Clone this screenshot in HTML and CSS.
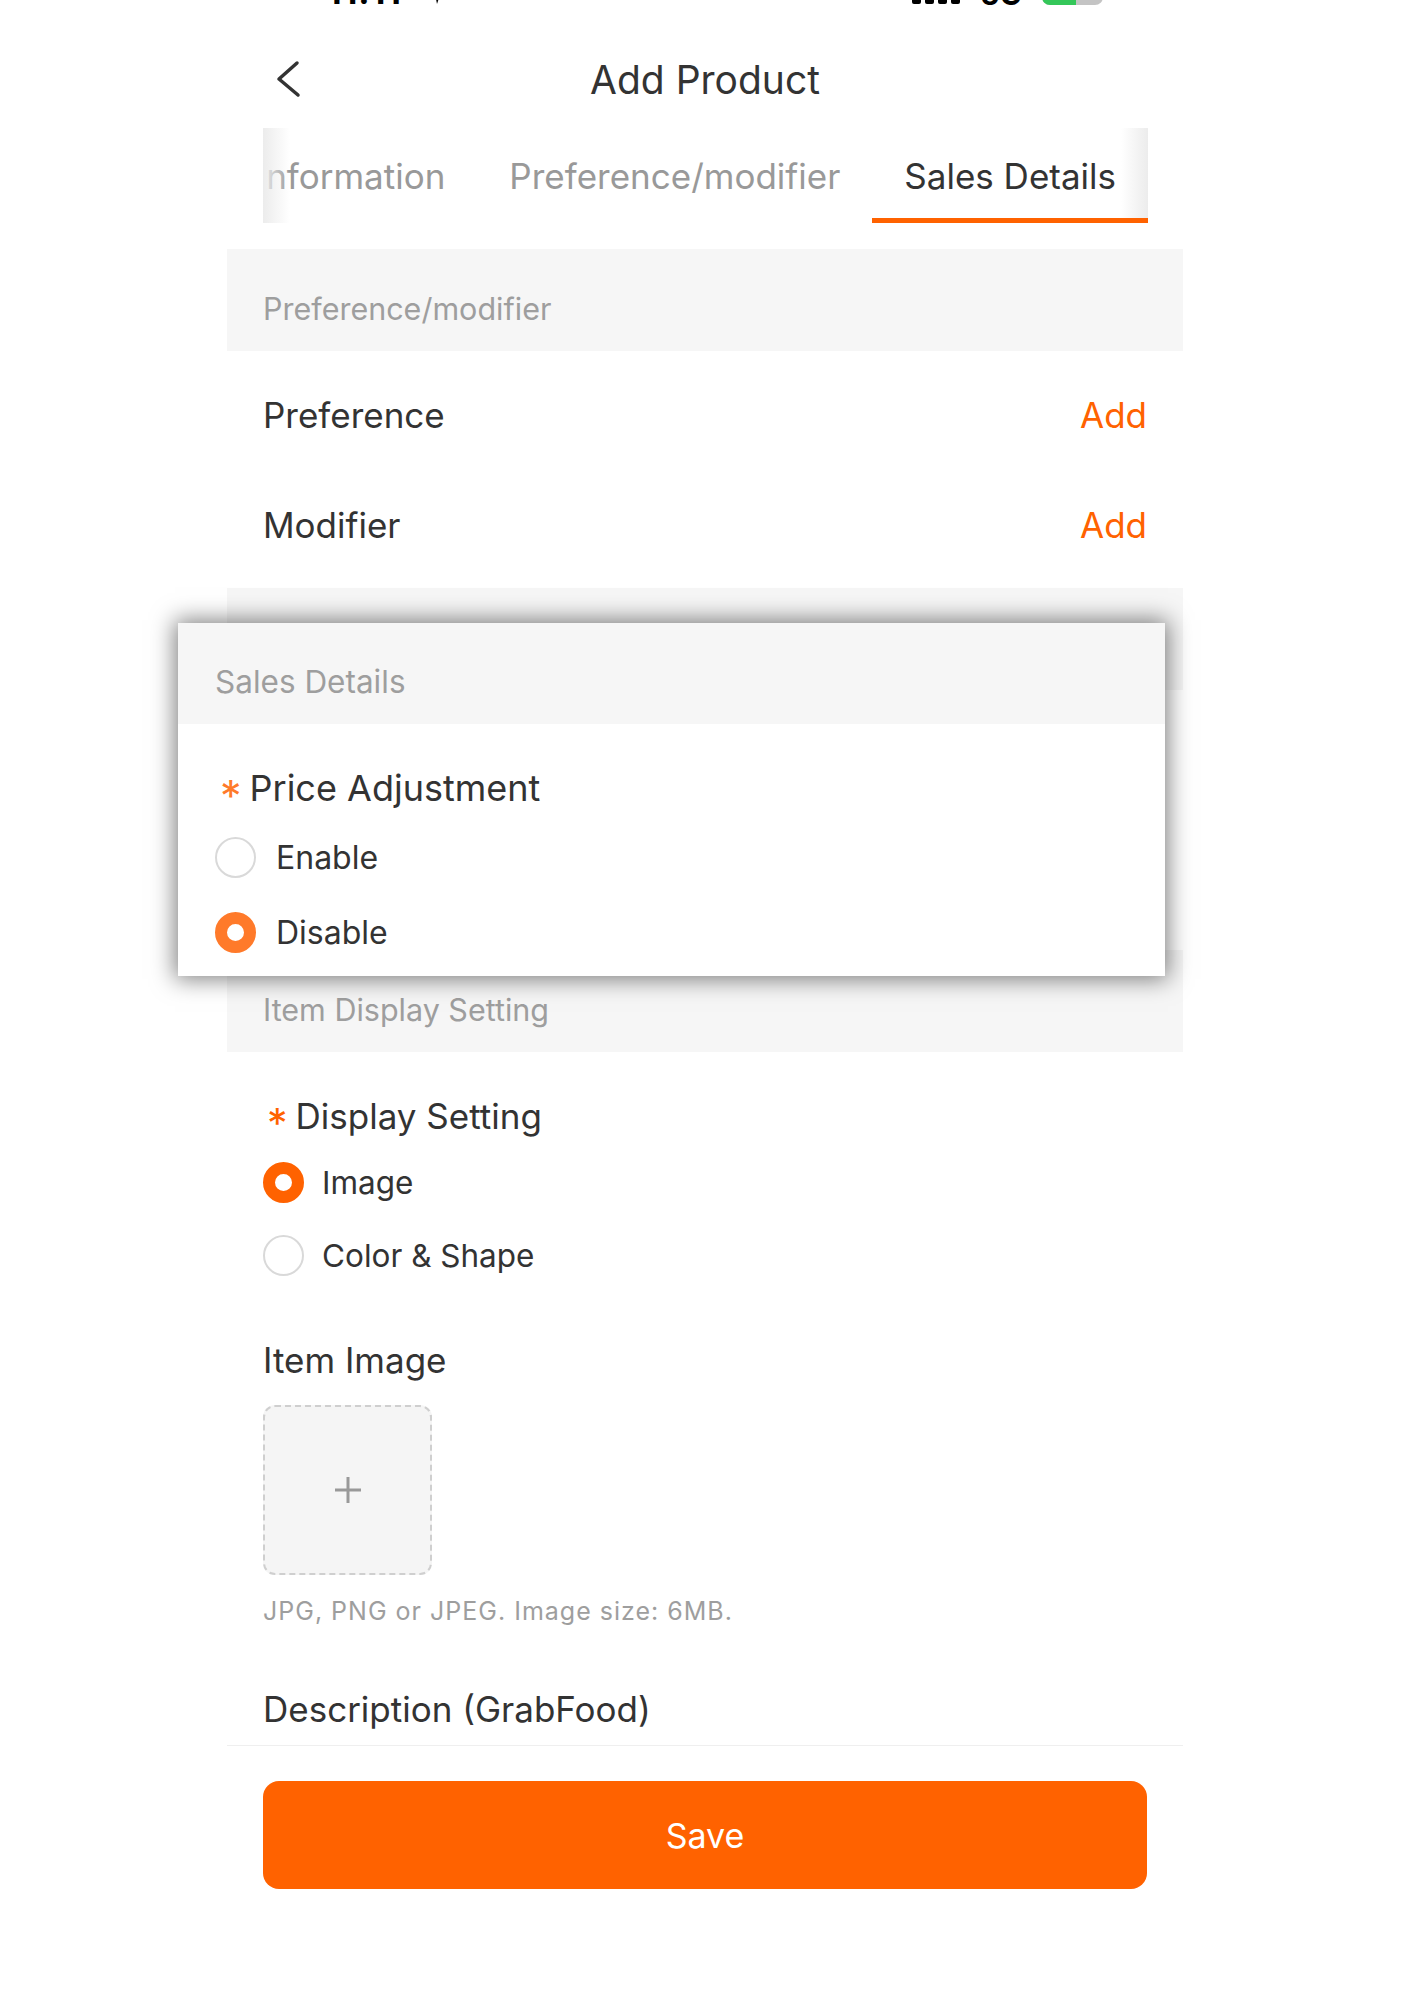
FILE: index.html
```html
<!DOCTYPE html>
<html lang="en">
<head>
    <meta charset="UTF-8">
    <meta name="viewport" content="width=device-width, initial-scale=1.0">
    <title>Add Product</title>
    <link rel="stylesheet" href="styles.css">
</head>
<body>
<div class="page">
    <div class="status">
        <div class="status-left">
            <span class="status-time">11:11</span>
            <svg class="status-loc" width="20" height="22" viewBox="0 0 20 22"><path d="M18 0 L2 8 L9 11 L11 21 Z" fill="#000"/></svg>
        </div>
        <div class="status-right">
            <div class="signal"><span></span><span></span><span></span><span></span></div>
            <span class="net">5G</span>
            <div class="battery"><span class="battery-fill"></span></div>
        </div>
    </div>

    <div class="nav">
        <button class="back" aria-label="Back">
            <svg width="28" height="40" viewBox="0 0 28 40"><path d="M22 4 L4 20 L23 36" fill="none" stroke="#333" stroke-width="3.5" stroke-linecap="round" stroke-linejoin="round"/></svg>
        </button>
        <h1 class="nav-title">Add Product</h1>
        <span></span>
    </div>

    <div class="tabs">
        <div class="tab">Basic Information</div>
        <div class="tab">Preference/modifier</div>
        <div class="tab active">Sales Details</div>
    </div>

    <div class="section-head first">Preference/modifier</div>
    <div class="list">
        <div class="row"><span>Preference</span><a class="link" href="#">Add</a></div>
        <div class="row"><span>Modifier</span><a class="link" href="#">Add</a></div>
    </div>

    <div class="sales">
        <!-- the page underneath, covered by the callout -->
        <div class="under" aria-hidden="true">
            <div class="section-head"><span>Sales Details</span></div>
            <div class="field"></div>
        </div>

        <div class="callout">
            <div class="section-head">Sales Details</div>
            <div class="field">
                <div class="label"><span class="req">*</span>Price Adjustment</div>
                <label class="radio"><span class="dot"></span>Enable</label>
                <label class="radio"><span class="dot checked"></span>Disable</label>
            </div>
        </div>
    </div>

    <div class="section-head">Item Display Setting</div>
    <div class="field display">
        <div class="label"><span class="req">*</span>Display Setting</div>
        <label class="radio"><span class="dot checked"></span>Image</label>
        <label class="radio"><span class="dot"></span>Color &amp; Shape</label>

        <div class="label item-image">Item Image</div>
        <div class="upload">
            <svg width="28" height="28" viewBox="0 0 28 28"><path d="M14 1 V27 M1 14 H27" stroke="#999" stroke-width="3"/></svg>
        </div>
        <div class="hint">JPG, PNG or JPEG. Image size: 6MB.</div>

        <div class="label desc">Description (GrabFood)</div>
    </div>

    <div class="footer">
        <button class="save">Save</button>
    </div>
</div>
</body>
</html>
```

FILE: styles.css
```css
body {
    margin: 0;
    background: #fff;
    font-family: Inter, "Noto Sans", sans-serif;
    color: #333;
}

.page {
    width: 956px;
    margin-left: calc(50% - 480px);
}

/* status bar, only its bottom edge is on screen */
.status {
    height: 6px;
    overflow: hidden;
    display: flex;
    justify-content: space-between;
    align-items: flex-end;
    padding: 0 80px 0 100px;
}
.status-left {
    display: flex;
    align-items: flex-end;
    gap: 24px;
}
.status-time {
    font-size: 34px;
    font-weight: 700;
    line-height: 1;
    color: #000;
    margin-bottom: -3px;
    letter-spacing: 1px;
}
.status-loc {
    margin-bottom: 1px;
}
.status-right {
    display: flex;
    align-items: flex-end;
    gap: 20px;
}
.signal {
    display: flex;
    align-items: flex-end;
    gap: 4px;
    margin-bottom: 2px;
}
.signal span {
    width: 9px;
    height: 20px;
    background: #000;
    border-radius: 2px;
}
.net {
    font-size: 30px;
    font-weight: 700;
    line-height: 1;
    color: #000;
    margin-bottom: -3px;
}
.battery {
    width: 61px;
    height: 28px;
    border-radius: 8px;
    background: #c4c4c4;
    overflow: hidden;
    margin-bottom: 1px;
    display: flex;
}
.battery-fill {
    width: 34px;
    background: #34c759;
}

/* navigation */
.nav {
    height: 122px;
    box-sizing: border-box;
    padding-top: 24px;
    display: grid;
    grid-template-columns: 1fr auto 1fr;
    align-items: center;
}
.back {
    justify-self: start;
    margin-left: 48px;
    padding: 0;
    border: none;
    background: none;
    display: flex;
}
.nav-title {
    margin: 0;
    font-size: 39px;
    font-weight: 400;
    color: #333;
}

/* tabs */
.tabs {
    position: relative;
    height: 95px;
    margin: 0 35px 0 36px;
    overflow: hidden;
    display: flex;
    justify-content: flex-end;
}
.tabs::before,
.tabs::after {
    content: "";
    position: absolute;
    top: 0;
    width: 27px;
    z-index: 1;
}
.tabs::before {
    left: 0;
    height: 95px;
    background: linear-gradient(to right, #ececec, rgba(255, 255, 255, 0));
}
.tabs::after {
    right: 0;
    height: 90px;
    background: linear-gradient(to left, #ececec, rgba(255, 255, 255, 0));
}
.tab {
    flex-shrink: 0;
    box-sizing: border-box;
    height: 95px;
    padding: 5px 32px 0;
    display: flex;
    align-items: center;
    font-size: 35px;
    color: #999;
    border-bottom: 5px solid transparent;
    white-space: nowrap;
}
.tab.active {
    color: #333;
    border-bottom-color: #ff6200;
}

/* sections */
.section-head {
    height: 102px;
    box-sizing: border-box;
    padding: 16px 36px 0;
    display: flex;
    align-items: center;
    background: #f6f6f6;
    font-size: 30.5px;
    color: #9e9e9e;
}
.section-head.first {
    margin-top: 26px;
}

.list {
    padding: 9px 36px 8px;
}
.row {
    height: 110px;
    display: flex;
    justify-content: space-between;
    align-items: center;
    font-size: 35px;
}
.link {
    color: #ff6200;
    text-decoration: none;
}

.field {
    padding: 40px 36px 17px;
}
.label {
    height: 48px;
    display: flex;
    align-items: center;
    font-size: 35px;
    color: #333;
}
.req {
    color: #ff6200;
    font-size: 41px;
    line-height: 1;
    margin: 14px 8px 0 4px;
}
.label + .radio {
    margin-top: 6px;
}
.radio {
    height: 73px;
    display: flex;
    align-items: center;
    gap: 18px;
    font-size: 31.5px;
    color: #333;
}
.dot {
    flex-shrink: 0;
    width: 41px;
    height: 41px;
    box-sizing: border-box;
    border-radius: 50%;
    border: 2px solid #d9d9d9;
    background: #fff;
}
.dot.checked {
    border: 12px solid #ff6200;
}

/* sales block with the highlighted callout on top */
.sales {
    position: relative;
}
.under .section-head span {
    visibility: hidden;
}
.under .field {
    height: 260px;
    box-sizing: border-box;
}
.callout {
    position: absolute;
    top: 35px;
    left: -49px;
    width: 987px;
    background: #fff;
    box-shadow: 0 0 22px 3px rgba(0, 0, 0, 0.5);
    z-index: 2;
}
.callout .section-head {
    height: 101px;
    padding-left: 37px;
    padding-right: 37px;
    font-size: 31.5px;
}
.callout .field {
    padding: 40px 37px 6px;
}
.callout .label {
    font-size: 36px;
}
.callout .req {
    font-size: 43px;
    margin-left: 5px;
}
.callout .req,
.callout .dot.checked {
    color: #ff7a2a;
    border-color: #ff7a2a;
}
.callout .label + .radio {
    margin-top: 8px;
}
.callout .radio {
    height: 75px;
    gap: 20px;
    font-size: 32px;
}

/* image upload */
.item-image {
    margin-top: 44px;
}
.upload {
    margin-top: 21px;
    width: 169px;
    height: 170px;
    box-sizing: border-box;
    border: 2px dashed #cfcfcf;
    border-radius: 12px;
    background: #f5f5f5;
    display: flex;
    align-items: center;
    justify-content: center;
}
.hint {
    margin-top: 21px;
    line-height: 30px;
    font-size: 25px;
    letter-spacing: 1px;
    color: #9e9e9e;
}
.desc {
    margin-top: 59px;
}
.field.display {
    padding-bottom: 12px;
}

/* footer */
.footer {
    border-top: 1px solid #efefef;
    padding: 35px 36px;
}
.save {
    display: block;
    width: 100%;
    height: 108px;
    border: none;
    border-radius: 16px;
    background: #ff6200;
    color: #fff;
    font-family: inherit;
    font-size: 34px;
}
```
